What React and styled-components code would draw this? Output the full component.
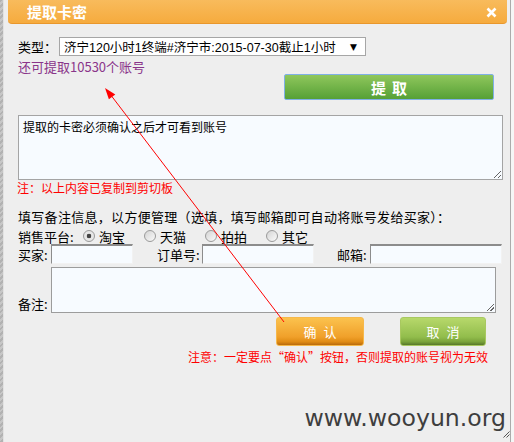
import styled, { createGlobalStyle } from "styled-components"

const GlobalStyle = createGlobalStyle`
  html, body { margin: 0; padding: 0; background: #eeeeee; }
  body {
    font-family: "Noto Sans CJK SC", "Liberation Sans", sans-serif;
    font-size: 12px;
    color: #000;
  }
`

const platforms = ["淘宝", "天猫", "拍拍", "其它"]

export default function App() {
    return (
        <>
            <GlobalStyle />
            <Page>
                <LeftRail />
                <Dialog>
                    <Header>
                        <Title>提取卡密</Title>
                        <Close>
                            <svg width="11" height="11" viewBox="0 0 11 11">
                                <path d="M1.5 1.5 L9.5 9.5 M9.5 1.5 L1.5 9.5" stroke="#fff" strokeWidth="2.6" />
                            </svg>
                        </Close>
                    </Header>
                    <Body>
                        <TypeRow>
                            <Label>类型：</Label>
                            <FakeSelect>
                                <span>济宁120小时1终端#济宁市:2015-07-30截止1小时</span>
                                <Caret>▼</Caret>
                            </FakeSelect>
                        </TypeRow>
                        <Remain>还可提取10530个账号</Remain>
                        <ExtractRow>
                            <ExtractButton>提取</ExtractButton>
                        </ExtractRow>
                        <Result readOnly value="提取的卡密必须确认之后才可看到账号" />
                        <Note>注：以上内容已复制到剪切板</Note>
                        <Hint>填写备注信息，以方便管理（选填，填写邮箱即可自动将账号发给买家）：</Hint>
                        <RadioRow>
                            <PlatformLabel>销售平台:</PlatformLabel>
                            {platforms.map((p, i) => (
                                <RadioItem key={p}>
                                    <Radio $checked={i === 0} />
                                    {p}
                                </RadioItem>
                            ))}
                        </RadioRow>
                        <FieldRow>
                            <FieldLabel $w={33}>买家:</FieldLabel>
                            <Field $w={82} />
                            <FieldLabel $w={45} $gap={24}>订单号:</FieldLabel>
                            <Field $w={112} />
                            <FieldLabel $w={33} $gap={23}>邮箱:</FieldLabel>
                            <Field $w={132} />
                        </FieldRow>
                        <MemoRow>
                            <FieldLabel $w={33}>备注:</FieldLabel>
                            <Memo />
                        </MemoRow>
                        <ActionRow>
                            <ActionButton $kind="ok">确认</ActionButton>
                            <ActionButton $kind="cancel">取消</ActionButton>
                        </ActionRow>
                        <Warning>注意：一定要点“确认”按钮，否则提取的账号视为无效</Warning>
                        <Watermark>www.wooyun.org</Watermark>
                    </Body>
                </Dialog>
                <RightRail />
                <Grip width="7" height="7" viewBox="0 0 7 7">
                    <path d="M0.5 6.5 L6.5 0.5 M3.5 6.5 L6.5 3.5" stroke="#555" strokeWidth="1" />
                </Grip>
                <Arrow width="514" height="442" viewBox="0 0 514 442">
                    <line x1="284" y1="322" x2="110" y2="94" stroke="#ff0000" strokeWidth="1" />
                    <polygon points="105,88 108.9,99.3 115.3,94.5" fill="#ff0000" />
                </Arrow>
            </Page>
        </>
    )
}

const Page = styled.div`
    position: relative;
    width: 514px;
    height: 442px;
    display: flex;
    overflow: hidden;
`

const LeftRail = styled.div`
    width: 3px;
    flex-shrink: 0;
    background: repeating-linear-gradient(135deg, #b2b2b2 0 2px, #c6c6c6 2px 4px);
    box-shadow: 1px 0 0 #e2e2e2;
`

const RightRail = styled.div`
    width: 6px;
    flex-shrink: 0;
    background: linear-gradient(to right, #eeeeee 0 2px, #ababab 2px 3px, #f6f6f6 3px);
`

const Dialog = styled.div`
    flex: 1;
    display: flex;
    flex-direction: column;
`

const Header = styled.div`
    margin: 0 1px 0 5px;
    height: 23px;
    display: flex;
    align-items: center;
    justify-content: space-between;
    padding: 0 10px 0 19px;
    background: linear-gradient(to bottom, #f8bb5c, #f6ab3e);
    border-bottom: 1px solid #e9972c;
    border-radius: 0 0 4px 4px;
`

const Title = styled.div`
    color: #fff;
    font-weight: bold;
    font-size: 15px;
    line-height: 23px;
`

const Close = styled.div`
    display: flex;
    margin-top: 1px;
`

const Body = styled.div`
    padding: 13px 5px 0 15px;
    display: flex;
    flex-direction: column;
`

const TypeRow = styled.div`
    display: flex;
    align-items: center;
    height: 19px;
`

const Label = styled.span`
    font-size: 13px;
    margin-right: 2px;
`

const FakeSelect = styled.div`
    box-sizing: border-box;
    width: 307px;
    height: 19px;
    border: 1px solid #a6a6a6;
    background: #fff;
    display: flex;
    align-items: center;
    justify-content: space-between;
    padding: 0 8px 0 4px;
    font-family: "Liberation Sans", "Noto Sans CJK SC", sans-serif;
    font-size: 12.5px;
    white-space: nowrap;
`

const Caret = styled.span`
    font-size: 9px;
    font-family: "DejaVu Sans", sans-serif;
`

const Remain = styled.div`
    margin-top: 4px;
    line-height: 14px;
    font-size: 13px;
    color: #8a358a;
`

const ExtractRow = styled.div`
    display: flex;
    justify-content: flex-end;
    padding-right: 9px;
`

const ExtractButton = styled.div`
    box-sizing: border-box;
    width: 210px;
    height: 26px;
    border: 1px solid #7fb0e6;
    border-radius: 2px;
    background: linear-gradient(to bottom, #8fc75c, #56a036);
    color: #fff;
    font-weight: bold;
    font-size: 15px;
    letter-spacing: 6px;
    text-indent: 6px;
    display: flex;
    align-items: center;
    justify-content: center;
`

const Result = styled.textarea`
    box-sizing: border-box;
    margin: 15px 0 0;
    width: 485px;
    height: 65px;
    border: 1px solid #a4a4a4;
    background: #f7fbff;
    padding: 3px 4px;
    font-family: "Noto Sans CJK SC", sans-serif;
    font-size: 12px;
    line-height: 16px;
    color: #000;
    outline: none;
    display: block;
`

const Note = styled.div`
    margin: 1px 0 0 -1px;
    line-height: 14px;
    font-size: 12px;
    color: #ff0000;
`

const Hint = styled.div`
    margin-top: 14px;
    line-height: 16px;
    font-size: 13px;
    letter-spacing: 0.3px;
    white-space: nowrap;
`

const RadioRow = styled.div`
    margin-top: 3px;
    height: 16px;
    display: flex;
    align-items: center;
    font-size: 13px;
`

const PlatformLabel = styled.span`
    width: 65px;
`

const RadioItem = styled.label`
    display: flex;
    align-items: center;
    width: 61px;
`

const Radio = styled.span`
    box-sizing: border-box;
    width: 12px;
    height: 12px;
    border-radius: 50%;
    border: 1px solid #9a9a9a;
    background: ${p => p.$checked
        ? "radial-gradient(circle, #444 0 2px, #e6e6e6 2.6px)"
        : "linear-gradient(135deg, #d4d4d4, #fafafa)"};
    margin-right: 4px;
`

const FieldRow = styled.div`
    display: flex;
    align-items: center;
    height: 20px;
`

const FieldLabel = styled.span`
    width: ${p => p.$w}px;
    margin-left: ${p => p.$gap || 0}px;
    font-size: 13px;
    white-space: nowrap;
`

const Field = styled.div`
    box-sizing: border-box;
    width: ${p => p.$w}px;
    height: 20px;
    background: #f7fbff;
    border-top: 2px solid #8c8c8c;
    border-left: 1px solid #8c8c8c;
    border-right: 1px solid #f2f2f2;
    border-bottom: 1px solid #f2f2f2;
`

const MemoRow = styled.div`
    margin-top: 3px;
    display: flex;
    align-items: flex-end;
    font-size: 13px;
`

const Memo = styled.div`
    box-sizing: border-box;
    width: 445px;
    height: 46px;
    border: 1px solid #9c9c9c;
    background: #f7fbff;
    position: relative;
    &::after {
        content: "";
        position: absolute;
        right: 1px;
        bottom: 1px;
        width: 7px;
        height: 7px;
        background: linear-gradient(135deg, transparent 0 45%, #666 45% 55%, transparent 55% 70%, #666 70% 80%, transparent 80%);
    }
`

const ActionRow = styled.div`
    margin: 4px 0 0 258px;
    display: flex;
    gap: 36px;
`

const ActionButton = styled.div`
    box-sizing: border-box;
    width: ${p => p.$kind === "ok" ? 88 : 86}px;
    height: 29px;
    border-radius: 3px;
    color: #fff;
    font-size: 13px;
    letter-spacing: 7px;
    text-indent: 7px;
    display: flex;
    align-items: center;
    justify-content: center;
    background: ${p => p.$kind === "ok"
        ? "linear-gradient(to bottom, #fbc24e, #f0a02a 70%, #e08b14 88%, #b86a0c)"
        : "linear-gradient(to bottom, #b7d86b, #92bd4c 70%, #7aa33a 88%, #57782a)"};
    border: 1px solid ${p => p.$kind === "ok" ? "#f6b84a" : "#a8c860"};
`

const Warning = styled.div`
    margin: 4px 0 0 170px;
    line-height: 14px;
    font-size: 12px;
    color: #ff0000;
    white-space: nowrap;
`

const Watermark = styled.div`
    margin: 40px -3px 0 0;
    text-align: right;
    font-family: "DejaVu Sans", sans-serif;
    font-size: 23.6px;
    line-height: 28px;
    color: #3e3e3e;
`

const Grip = styled.svg`
    position: absolute;
    right: 4px;
    bottom: 4px;
`

const Arrow = styled.svg`
    position: absolute;
    left: 0;
    top: 0;
    pointer-events: none;
`
